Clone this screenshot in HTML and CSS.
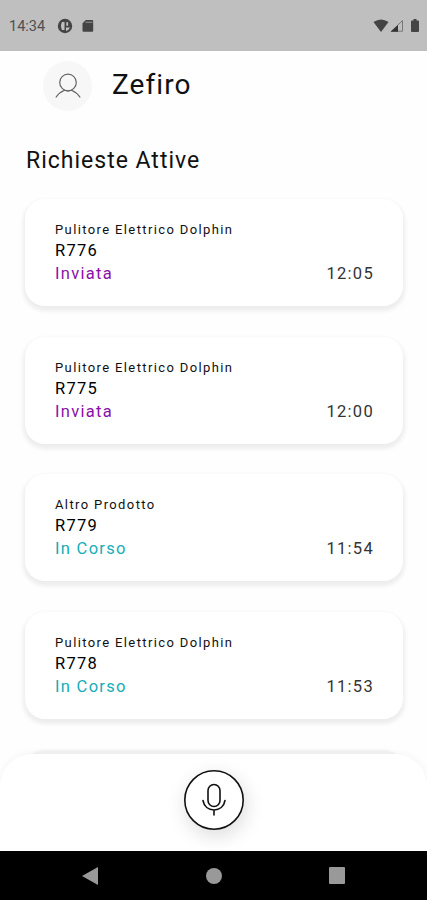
FILE: index.html
```html
<!DOCTYPE html>
<html lang="it">
<head>
    <meta charset="UTF-8">
    <meta name="viewport" content="width=device-width, initial-scale=1.0">
    <title>Richieste Attive</title>
    <link rel="stylesheet" href="styles.css">
</head>
<body>
    <div class="status-bar">
        <span class="clock">14:34</span>
        <svg class="status-app" width="16" height="16" viewBox="0 0 16 16">
            <circle cx="8" cy="8" r="7.200" fill="#444"/>
            <path d="M5 4h2.500v8H5q-2-4 0-8zM9.300 4.200h1.800v3.600H9.300zM9 9.500h4q-1 2.500-4 3.500z" fill="#bfbfbf"/>
        </svg>
        <svg class="status-card" width="12" height="14" viewBox="0 0 12 14">
            <path d="M3.800 1h6.400q1 0 1 1v9.800q0 1-1 1H1.500q-1 0-1-1V4.300z" fill="#444"/>
            <path d="M3.500 3.300h7" stroke="#888" stroke-width="1.200"/>
        </svg>
        <div class="status-right">
            <svg width="16" height="14" viewBox="0 0 16 14">
                <path d="M.5 3Q8-2 15.500 3L8 13z" fill="#444"/>
            </svg>
            <svg width="14" height="14" viewBox="0 0 14 14">
                <path d="M12.500 1.500v10.700H1.500z" fill="none" stroke="#777" stroke-width="1"/>
                <path d="M8 6v6.700H.5z" fill="#333"/>
            </svg>
            <svg class="battery" width="8" height="14" viewBox="0 0 8 14">
                <path d="M2.500 0h3v1.500H7q1 0 1 1V12q0 1-1 1H1q-1 0-1-1V2.500q0-1 1-1h1.500z" fill="#444"/>
            </svg>
        </div>
    </div>

    <div class="content">
        <div class="header">
            <div class="avatar">
                <svg width="26" height="26" viewBox="0 0 26 26" fill="none" stroke="#666" stroke-width="1.200">
                    <circle cx="13" cy="9.500" r="8.300"/>
                    <path d="M.8 24.500Q4 19.500 9.500 17.200Q13 18.500 16.500 17.200Q22 19.500 25.200 24.500"/>
                </svg>
            </div>
            <h1>Zefiro</h1>
        </div>
        <h2>Richieste Attive</h2>
        <div class="requests">
            <div class="card">
                <div class="product">Pulitore Elettrico Dolphin</div>
                <div class="code">R776</div>
                <div class="row"><span class="sent">Inviata</span><span class="time">12:05</span></div>
            </div>
            <div class="card">
                <div class="product">Pulitore Elettrico Dolphin</div>
                <div class="code">R775</div>
                <div class="row"><span class="sent">Inviata</span><span class="time">12:00</span></div>
            </div>
            <div class="card">
                <div class="product">Altro Prodotto</div>
                <div class="code">R779</div>
                <div class="row"><span class="progress">In Corso</span><span class="time">11:54</span></div>
            </div>
            <div class="card">
                <div class="product">Pulitore Elettrico Dolphin</div>
                <div class="code">R778</div>
                <div class="row"><span class="progress">In Corso</span><span class="time">11:53</span></div>
            </div>
            <div class="card card-under"></div>
        </div>
    </div>

    <div class="bottom-bar">
        <button class="mic" type="button" aria-label="Microfono">
            <svg width="60" height="60" viewBox="0 0 60 60" fill="none" stroke="#111" stroke-width="1.600" stroke-linecap="round">
                <circle cx="30" cy="30" r="29.200"/>
                <rect x="24" y="14.500" width="12" height="22" rx="6"/>
                <path d="M19 30.500C20 36.500 24.500 40 30 40S40 36.500 41 30.500M30 40v5"/>
            </svg>
        </button>
    </div>

    <div class="nav-bar">
        <svg width="16" height="18" viewBox="0 0 16 18"><path d="M0 9L16 0v18z" fill="#999"/></svg>
        <svg width="16" height="16" viewBox="0 0 16 16"><circle cx="8" cy="8" r="8" fill="#999"/></svg>
        <svg width="16" height="17" viewBox="0 0 16 17"><rect width="16" height="17" rx="1" fill="#999"/></svg>
    </div>
</body>
</html>
```
FILE: styles.css
```css
* {
    box-sizing: border-box;
}
body {
    margin: 0;
    height: 900px;
    display: flex;
    flex-direction: column;
    overflow: hidden;
    font-family: Roboto, sans-serif;
    background-color: #fefefe;
    color: #111;
}
.status-bar {
    height: 51px;
    flex-shrink: 0;
    display: flex;
    align-items: center;
    padding: 1px 8px 0 9px;
    background-color: #bfbfbf;
    color: #505050;
}
.clock {
    width: 37px;
    font-size: 14.5px;
    line-height: 16px;
    padding-top: 2px;
}
.status-app {
    margin-left: 11px;
}
.status-card {
    margin-left: 9px;
}
.status-right {
    display: flex;
    margin-left: auto;
    gap: 1px;
}
.battery {
    margin-left: 6px;
}
.content {
    height: 703px;
    flex-shrink: 0;
}
.header {
    display: flex;
    padding: 10px 0 0 43px;
}
.avatar {
    width: 49px;
    height: 50px;
    border-radius: 50%;
    background-color: #f7f7f7;
    display: flex;
    align-items: center;
    justify-content: center;
}
h1 {
    margin: 7px 0 0 20px;
    font-size: 28px;
    line-height: 34px;
    font-weight: 400;
    letter-spacing: 1.1px;
}
h2 {
    margin: 35px 0 0 26px;
    font-size: 23px;
    line-height: 30px;
    font-weight: 400;
    letter-spacing: 1px;
}
.requests {
    display: flex;
    flex-direction: column;
    gap: 30.7px;
    padding: 23px 24px 0 25px;
}
.card {
    height: 107px;
    flex-shrink: 0;
    padding: 22px 29px 0 30px;
    border-radius: 20px;
    background-color: #fff;
    box-shadow: 0 3px 4px 2px rgba(0, 0, 0, 0.07);
}
.card-under {
    background-color: #f3f3f3;
}
.product {
    font-size: 13px;
    line-height: 18px;
    letter-spacing: 1.38px;
}
.code {
    padding-top: 1px;
    font-size: 16.5px;
    line-height: 22px;
    letter-spacing: 1.3px;
    color: #000;
}
.row {
    display: flex;
    justify-content: space-between;
    font-size: 16.5px;
    line-height: 23px;
    letter-spacing: 1.3px;
}
.sent {
    color: #8a10a8;
}
.progress {
    color: #16adb8;
}
.time {
    color: #333;
}
.bottom-bar {
    position: relative;
    height: 97px;
    flex-shrink: 0;
    display: flex;
    justify-content: center;
    padding: 16px 0 0 1px;
    border-radius: 32px 32px 0 0;
    background-color: #fff;
    box-shadow: 0 0 8px rgba(0, 0, 0, 0.05);
}
.mic {
    width: 60px;
    height: 60px;
    padding: 0;
    border: none;
    border-radius: 50%;
    background-color: #fff;
    box-shadow: 2px 6px 20px rgba(0, 0, 0, 0.14);
}
.mic svg {
    display: block;
}
.nav-bar {
    position: relative;
    height: 49px;
    flex-shrink: 0;
    display: flex;
    align-items: center;
    justify-content: space-between;
    padding: 0 82px 0 82px;
    background-color: #000;
}
```
